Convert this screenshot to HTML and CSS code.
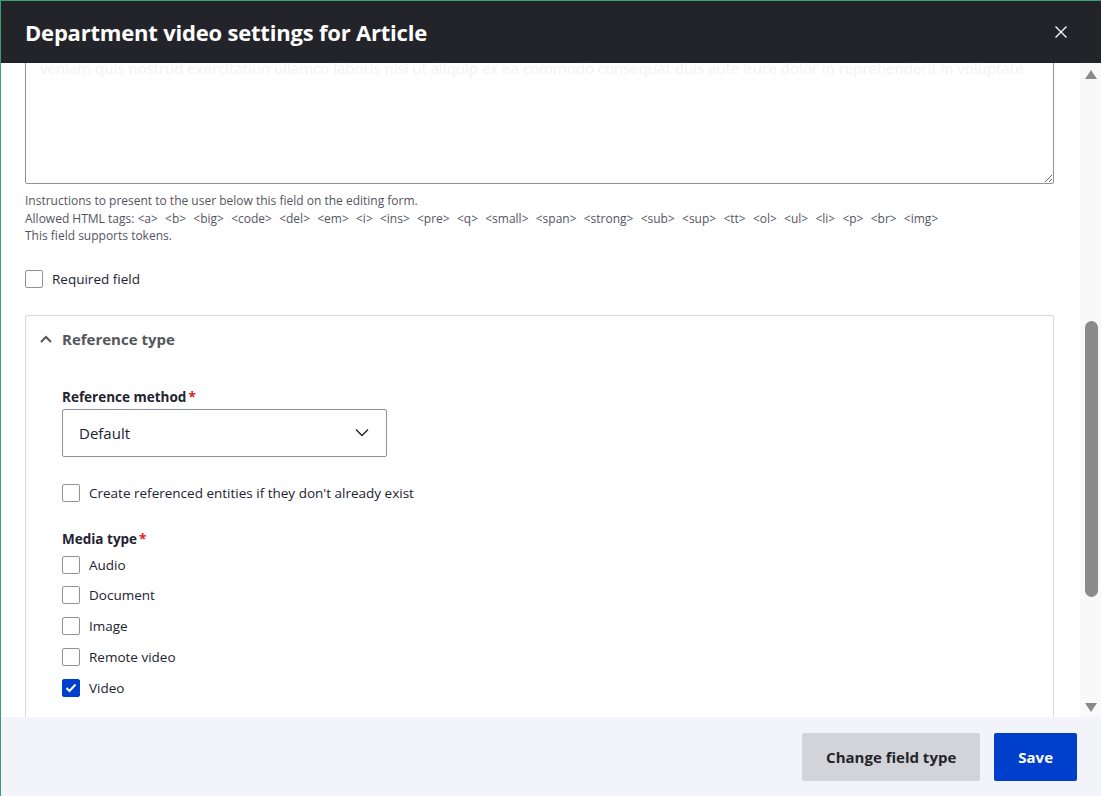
FILE: index.html
```html
<!DOCTYPE html>
<html lang="en">
<head>
    <meta charset="UTF-8">
    <meta name="viewport" content="width=device-width, initial-scale=1.0">
    <title>Department video settings for Article</title>
    <link rel="stylesheet" href="styles.css">
</head>
<body>
    <div class="dialog">
        <header class="dialog-header">
            <h1>Department video settings for Article</h1>
            <button class="dialog-close" aria-label="Close">
                <svg width="14" height="14" viewBox="0 0 14 14"><path d="M1.5 1.5 L12.5 12.5 M12.5 1.5 L1.5 12.5" stroke="#fff" stroke-width="1.3" fill="none"/></svg>
            </button>
        </header>

        <div class="dialog-main">
            <div class="dialog-content">
                <div class="form-item">
                    <textarea class="form-textarea" readonly>Lorem ipsum dolor sit amet consectetur adipiscing elit sed do eiusmod tempor incididunt ut labore et dolore magna aliqua enim ad minim veniam quis nostrud exercitation ullamco laboris nisi ut aliquip ex ea commodo consequat duis aute irure dolor in reprehenderit in voluptate</textarea>
                    <div class="description">
                        Instructions to present to the user below this field on the editing form.<br>
                        Allowed HTML tags: <span class="tags">&lt;a&gt; &lt;b&gt; &lt;big&gt; &lt;code&gt; &lt;del&gt; &lt;em&gt; &lt;i&gt; &lt;ins&gt; &lt;pre&gt; &lt;q&gt; &lt;small&gt; &lt;span&gt; &lt;strong&gt; &lt;sub&gt; &lt;sup&gt; &lt;tt&gt; &lt;ol&gt; &lt;ul&gt; &lt;li&gt; &lt;p&gt; &lt;br&gt; &lt;img&gt;</span><br>
                        This field supports tokens.
                    </div>
                </div>

                <label class="checkbox required-field">
                    <span class="box"></span>
                    <span>Required field</span>
                </label>

                <div class="details">
                    <div class="details-summary">
                        <svg width="12" height="8" viewBox="0 0 12 8"><path d="M1 7 L6 2 L11 7" stroke="#55565b" stroke-width="2" fill="none"/></svg>
                        <span>Reference type</span>
                    </div>
                    <div class="details-wrapper">
                        <div class="field-label">Reference method<span class="marker">*</span></div>
                        <div class="select">
                            <span>Default</span>
                            <svg width="14" height="9" viewBox="0 0 14 9"><path d="M1 1.5 L7 7.5 L13 1.5" stroke="#232429" stroke-width="1.4" fill="none"/></svg>
                        </div>

                        <label class="checkbox auto-create">
                            <span class="box"></span>
                            <span>Create referenced entities if they don't already exist</span>
                        </label>

                        <div class="field-label">Media type<span class="marker">*</span></div>
                        <div class="checkbox-list">
                            <label class="checkbox"><span class="box"></span><span>Audio</span></label>
                            <label class="checkbox"><span class="box"></span><span>Document</span></label>
                            <label class="checkbox"><span class="box"></span><span>Image</span></label>
                            <label class="checkbox"><span class="box"></span><span>Remote video</span></label>
                            <label class="checkbox"><span class="box checked"><svg width="12" height="10" viewBox="0 0 12 10"><path d="M1.5 5 L4.5 8 L10.5 1.5" stroke="#fff" stroke-width="2" fill="none"/></svg></span><span>Video</span></label>
                        </div>
                    </div>
                </div>
            </div>

            <div class="scrollbar">
                <span class="arrow up"></span>
                <div class="track"><div class="thumb"></div></div>
                <span class="arrow down"></span>
            </div>
        </div>

        <footer class="dialog-buttons">
            <button class="button">Change field type</button>
            <button class="button button-primary">Save</button>
        </footer>
    </div>
</body>
</html>
```

FILE: styles.css
```css
html, body {
    margin: 0;
    height: 100%;
}

body {
    font-family: "Open Sans", "Noto Sans", sans-serif;
    color: #222330;
    background: #fff;
}

.dialog {
    height: 796px;
    box-sizing: border-box;
    border: 1px solid #3c9f6f;
    border-right: none;
    border-bottom: none;
    display: flex;
    flex-direction: column;
    overflow: hidden;
}

.dialog-header {
    height: 62px;
    flex: none;
    background: #232429;
    display: flex;
    align-items: center;
    justify-content: space-between;
    padding: 0 33px 0 24px;
    position: relative;
    z-index: 2;
}

.dialog-header h1 {
    margin: 0;
    color: #fff;
    font-size: 22px;
    font-weight: 700;
    letter-spacing: -0.2px;
}

.dialog-close {
    background: none;
    border: none;
    padding: 0;
    width: 14px;
    height: 14px;
    display: flex;
}

.dialog-main {
    flex: 1;
    display: flex;
    min-height: 0;
}

.dialog-content {
    flex: 1;
    overflow: hidden;
    padding: 0 26px 0 24px;
}

.form-textarea {
    display: block;
    box-sizing: border-box;
    width: 100%;
    height: 160px;
    margin-top: -39px;
    border: 1px solid #8e929c;
    border-radius: 2px;
    padding: 7px 14px;
    font-family: inherit;
    font-size: 15px;
    line-height: 24px;
    color: #f2f2f5;
    resize: vertical;
    outline: none;
    overflow: hidden;
}

.description {
    margin-top: 8px;
    font-size: 12px;
    line-height: 17.5px;
    color: #545560;
}

.tags {
    word-spacing: 4.1px;
}

.checkbox {
    display: flex;
    align-items: center;
    gap: 9px;
    font-size: 13.5px;
    color: #222330;
}

.box {
    width: 18px;
    height: 18px;
    box-sizing: border-box;
    border: 1px solid #8e929c;
    border-radius: 2px;
    background: #fff;
    flex: none;
    display: flex;
    align-items: center;
    justify-content: center;
}

.box.checked {
    background: #003ecc;
    border-color: #003ecc;
}

.required-field {
    margin-top: 25px;
}

.details {
    margin-top: 27px;
    border: 1px solid #d8d9de;
    border-radius: 2px;
}

.details-summary {
    height: 47px;
    display: flex;
    align-items: center;
    gap: 10px;
    padding-left: 14px;
    font-size: 15px;
    font-weight: 700;
    color: #55565b;
}

.details-wrapper {
    padding: 25px 36px 24px 36px;
}

.field-label {
    font-size: 13.5px;
    font-weight: 700;
    line-height: 18px;
    margin-bottom: 3px;
}

.marker {
    color: #dc2323;
    margin-left: 2px;
}

.select {
    width: 325px;
    height: 48px;
    box-sizing: border-box;
    border: 1px solid #8e929c;
    border-radius: 2px;
    display: flex;
    align-items: center;
    justify-content: space-between;
    padding: 0 17px 0 16px;
    font-size: 15px;
}

.auto-create {
    margin: 27px 0 28px;
}

.checkbox-list {
    display: flex;
    flex-direction: column;
    gap: 12.8px;
    margin-top: 8px;
}

.scrollbar {
    width: 21px;
    flex: none;
    background: #f9f9f9;
    display: flex;
    flex-direction: column;
    align-items: center;
}

.arrow {
    width: 0;
    height: 0;
    border-left: 6px solid transparent;
    border-right: 6px solid transparent;
    flex: none;
}

.arrow.up {
    border-bottom: 9px solid #8a8a8a;
    margin-top: 7px;
}

.arrow.down {
    border-top: 9px solid #8a8a8a;
    margin-bottom: 5px;
}

.track {
    flex: 1;
    width: 100%;
    display: flex;
    justify-content: center;
    padding-top: 242px;
    box-sizing: border-box;
}

.thumb {
    width: 13px;
    height: 276px;
    background: #8a8a8a;
    border-radius: 7px;
    margin-left: 1px;
}

.dialog-buttons {
    height: 79px;
    flex: none;
    background: #f3f4f9;
    display: flex;
    justify-content: flex-end;
    align-items: center;
    gap: 14px;
    padding: 0 24px;
    box-sizing: border-box;
}

.button {
    height: 48px;
    padding: 0 24px;
    border: none;
    border-radius: 2px;
    background: #d3d4d9;
    color: #232429;
    font-family: inherit;
    font-size: 15px;
    font-weight: 700;
}

.button-primary {
    background: #003ecc;
    color: #fff;
}
```
